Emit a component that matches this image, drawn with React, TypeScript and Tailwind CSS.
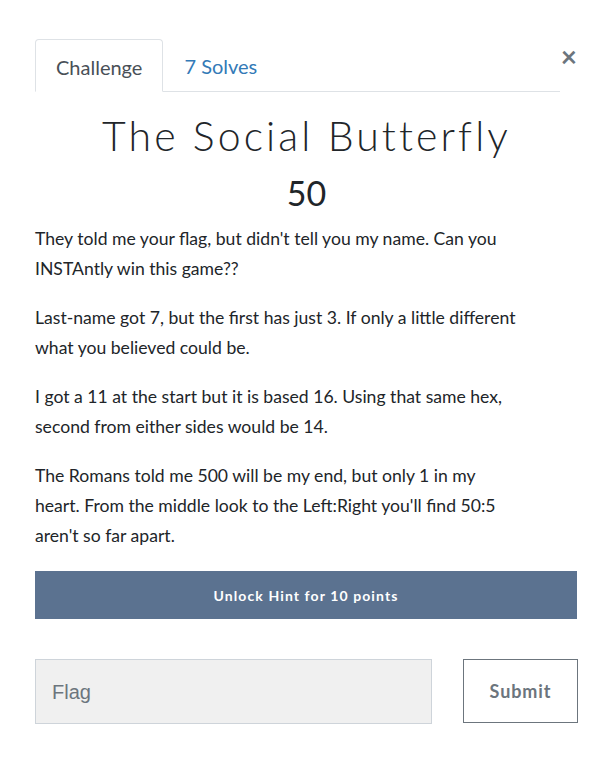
export default function App() {
  return (
    <div className="min-h-[780px] w-[613px] bg-white font-['Lato','Noto_Sans',sans-serif] text-[#212529]">
      <div className="px-[35px] pt-[39px]">
        <div className="flex items-start">
          <nav className="flex w-[525px] border-b border-[#dee2e6]">
            <div className="-mb-px rounded-t border border-[#dee2e6] border-b-white bg-white px-[20px] pt-[15px] pb-[12px] text-[20px] leading-[24px] text-[#495057]">
              Challenge
            </div>
            <div className="px-[21px] pt-[15px] pb-[12px] text-[20px] leading-[24px] text-[#337ab7]">7 Solves</div>
          </nav>
          <button className="ml-auto mt-[3px] mr-[1px] text-[28px] leading-[28px] font-bold text-[#6c757d]">×</button>
        </div>

        <h2 className="mt-[20px] text-center text-[41px] leading-[48px] font-light tracking-[3.1px] text-[#212529]">
          The Social Butterfly
        </h2>
        <h3 className="mt-[13px] text-center text-[34px] leading-[40px] font-normal">50</h3>

        <div className="mt-[11px] w-[486px] space-y-[19px] text-[17.6px] leading-[30px] text-[#212529]">
          <p>They told me your flag, but didn't tell you my name. Can you INSTAntly win this game??</p>
          <p>Last-name got 7, but the first has just 3. If only a little different what you believed could be.</p>
          <p>I got a 11 at the start but it is based 16. Using that same hex, second from either sides would be 14.</p>
          <p>
            The Romans told me 500 will be my end, but only 1 in my heart. From the middle look to the Left:Right you'll find 50:5 aren't so far apart.
          </p>
        </div>

        <button className="mt-[20px] flex h-[48px] w-[542px] items-center justify-center bg-[#5b7290] text-[14px] font-bold tracking-[1.1px] text-white">
          Unlock Hint for 10 points
        </button>

        <div className="mt-[40px] flex">
          <div className="flex h-[65px] w-[397px] items-center border border-[#ced4da] bg-[#f0f0f0] pl-[16px] font-['Liberation_Sans',Arial,sans-serif] text-[20px] text-[#6c757d]">
            Flag
          </div>
          <button className="ml-auto h-[64px] w-[115px] border border-[#6c757d] bg-white text-[18px] font-bold tracking-[0.9px] text-[#6c757d]">
            Submit
          </button>
        </div>
      </div>
    </div>
  )
}
